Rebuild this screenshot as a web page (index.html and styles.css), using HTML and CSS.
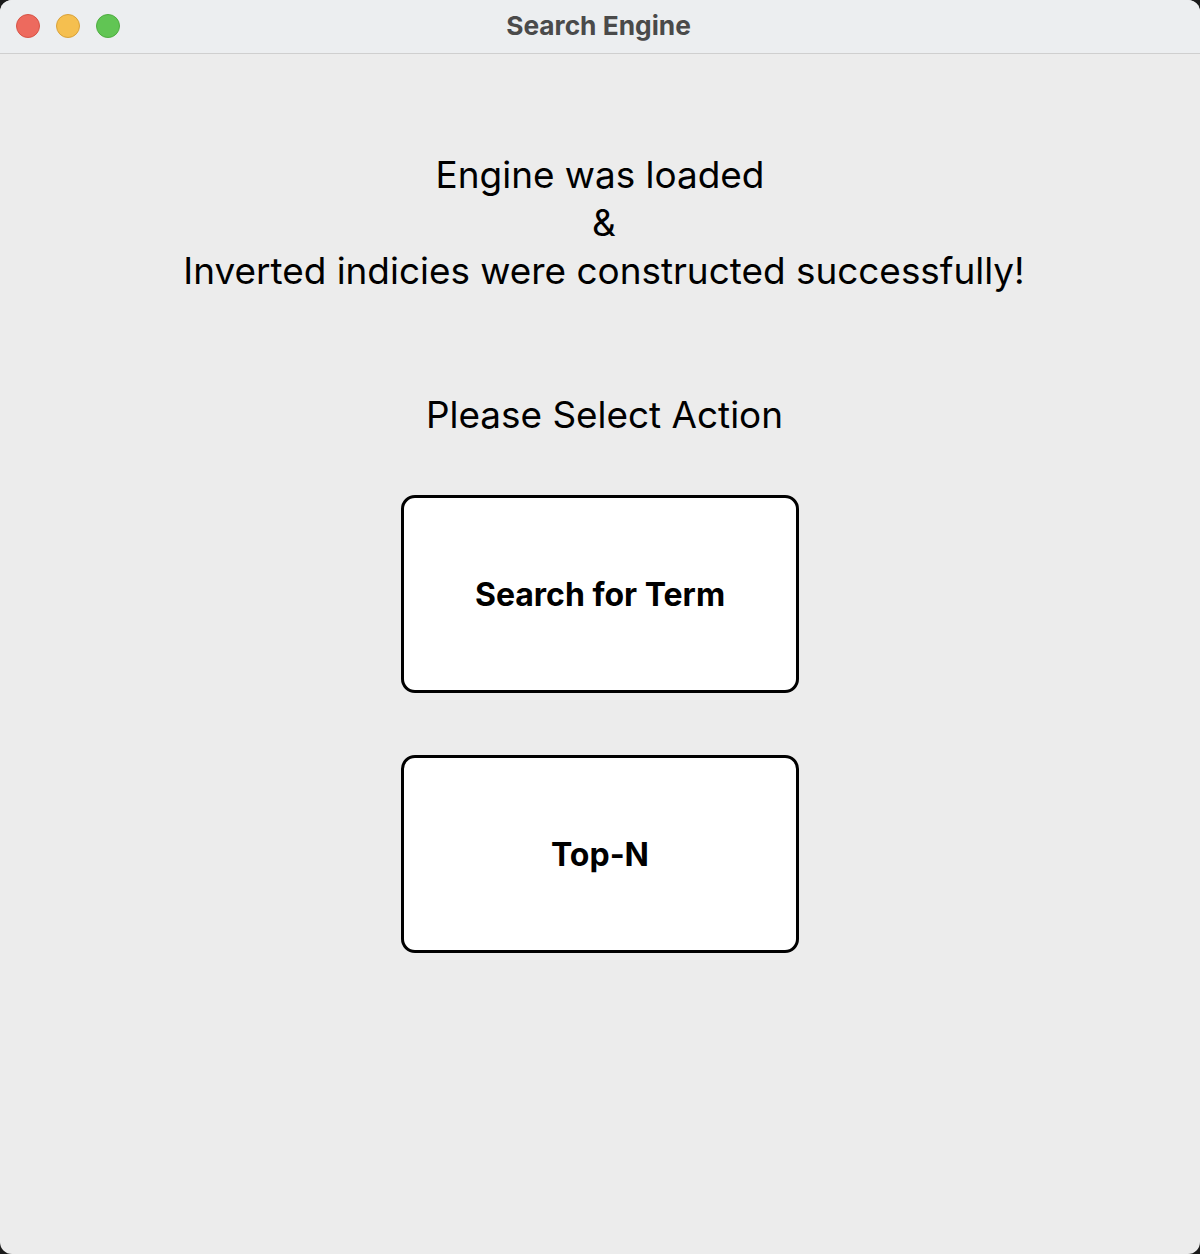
FILE: index.html
```html
<!DOCTYPE html>
<html>
<head>
<meta charset="utf-8">
<link rel="stylesheet" href="styles.css">
</head>
<body>
<div class="window">
  <div class="titlebar">
    <div class="lights">
      <span class="light red"></span>
      <span class="light yellow"></span>
      <span class="light green"></span>
    </div>
    <div class="title">Search Engine</div>
  </div>
  <div class="content">
    <div class="status">
      <div class="line first">Engine was loaded</div>
      <div class="line">&amp;</div>
      <div class="line">Inverted indicies were constructed successfully!</div>
    </div>
    <div class="prompt">Please Select Action</div>
    <div class="actions">
      <button class="action">Search for Term</button>
      <button class="action">Top-N</button>
    </div>
  </div>
</div>
</body>
</html>
```
FILE: styles.css
```css
html, body {
  margin: 0;
  padding: 0;
  background: #1b1b1b;
}
body {
  width: 1200px;
  height: 1254px;
  overflow: hidden;
  font-family: Inter, "Noto Sans", sans-serif;
}
.window {
  width: 1200px;
  height: 1254px;
  background: #ececec;
  border-radius: 12px;
  overflow: hidden;
  display: flex;
  flex-direction: column;
}
.titlebar {
  position: relative;
  height: 53px;
  border-bottom: 1px solid #cfcfcf;
  background: #eceef0;
  display: flex;
  align-items: center;
  justify-content: center;
}
.lights {
  position: absolute;
  left: 16px;
  top: 14px;
  display: flex;
  gap: 16px;
}
.light {
  width: 24px;
  height: 24px;
  border-radius: 50%;
  box-sizing: border-box;
}
.red { background: #ed6a5e; border: 1px solid #d75446; }
.yellow { background: #f5bf4f; border: 1px solid #d9a23a; }
.green { background: #61c554; border: 1px solid #4ead40; }
.title {
  font-weight: 700;
  font-size: 26.3px;
  color: #4a4a4a;
  margin-left: -3px;
  margin-top: -3px;
}
.content {
  display: flex;
  flex-direction: column;
  align-items: center;
  padding-top: 97px;
  color: #000;
}
.status {
  text-align: center;
  font-size: 36.9px;
  line-height: 48px;
  margin-left: 8px;
}
.first {
  margin-left: -8px;
}
.prompt {
  margin-top: 96px;
  font-size: 36.9px;
  line-height: 48px;
  margin-left: 9px;
}
.actions {
  margin-top: 56px;
  display: flex;
  flex-direction: column;
  gap: 62px;
}
.action {
  width: 398px;
  height: 198px;
  box-sizing: border-box;
  border: 3px solid #000;
  border-radius: 14px;
  background: #fff;
  font-family: Inter, "Noto Sans", sans-serif;
  font-weight: 700;
  font-size: 32px;
  color: #000;
  padding: 0;
}
```
